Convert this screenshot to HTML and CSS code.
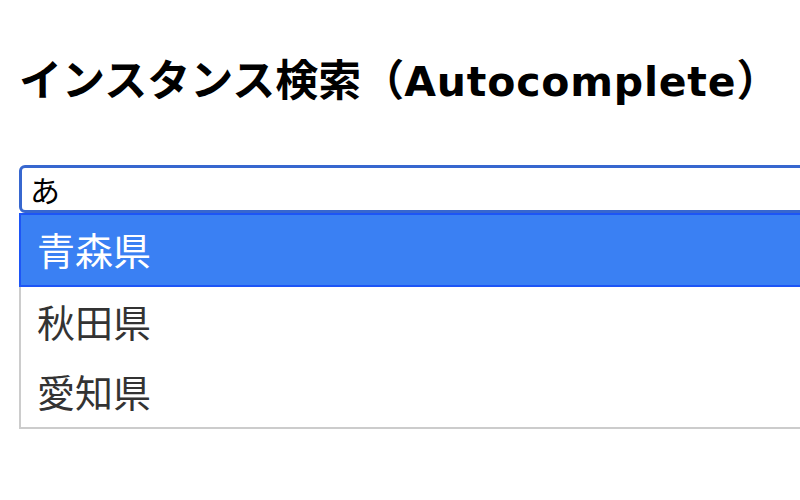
FILE: index.html
```html
<!DOCTYPE html>
<html lang="ja">
<head>
    <meta charset="UTF-8">
    <meta name="viewport" content="width=device-width, initial-scale=1.0">
    <title>インスタンス検索</title>
    <link rel="stylesheet" href="styles.css">
</head>
<body>
<div class="maindiv">
    <h1 class="title">インスタンス検索（<span class="latin">Autocomplete</span>）</h1>

    <div class="search">
        <input type="text" id="pref" class="search-input" value="あ" autocomplete="off">
        <ul class="suggest">
            <li class="suggest-item active">青森県</li>
            <li class="suggest-item">秋田県</li>
            <li class="suggest-item">愛知県</li>
        </ul>
    </div>
</div>
</body>
</html>
```

FILE: styles.css
```css
html, body {
    overflow: hidden;
}
body {
    font-family: "Noto Sans CJK JP", sans-serif;
    background-color: #fff;
    color: #000;
    margin: 0;
}
.maindiv {
    padding: 56px 0 0 19px;
}
.title {
    font-family: "Noto Sans CJK JP", sans-serif;
    font-size: 43px;
    font-weight: bold;
    line-height: 42px;
    margin: 0 0 62px 0;
    white-space: nowrap;
}
.latin {
    font-family: "DejaVu Sans", sans-serif;
    font-size: 41px;
    letter-spacing: 0.8px;
}
.search {
    width: 900px;
}
.search-input {
    display: block;
    width: 100%;
    height: 48px;
    box-sizing: border-box;
    margin: 0;
    padding: 0 8px;
    border: 3px solid #3767cf;
    border-radius: 6px;
    outline: none;
    font-family: "Noto Sans CJK JP", sans-serif;
    font-size: 30px;
    color: #000;
}
.suggest {
    list-style: none;
    margin: 0;
    padding: 0;
    border: 2px solid #cccccc;
    border-top: none;
}
.suggest-item {
    height: 70px;
    box-sizing: border-box;
    padding-left: 16px;
    line-height: 68px;
    font-size: 38px;
    color: #333;
}
.suggest-item.active {
    margin: 0 -2px;
    padding-left: 16px;
    height: 74px;
    line-height: 68px;
    background-color: #3a80f3;
    border: 2px solid #1d55f6;
    border-right: none;
    color: #fff;
}
```
